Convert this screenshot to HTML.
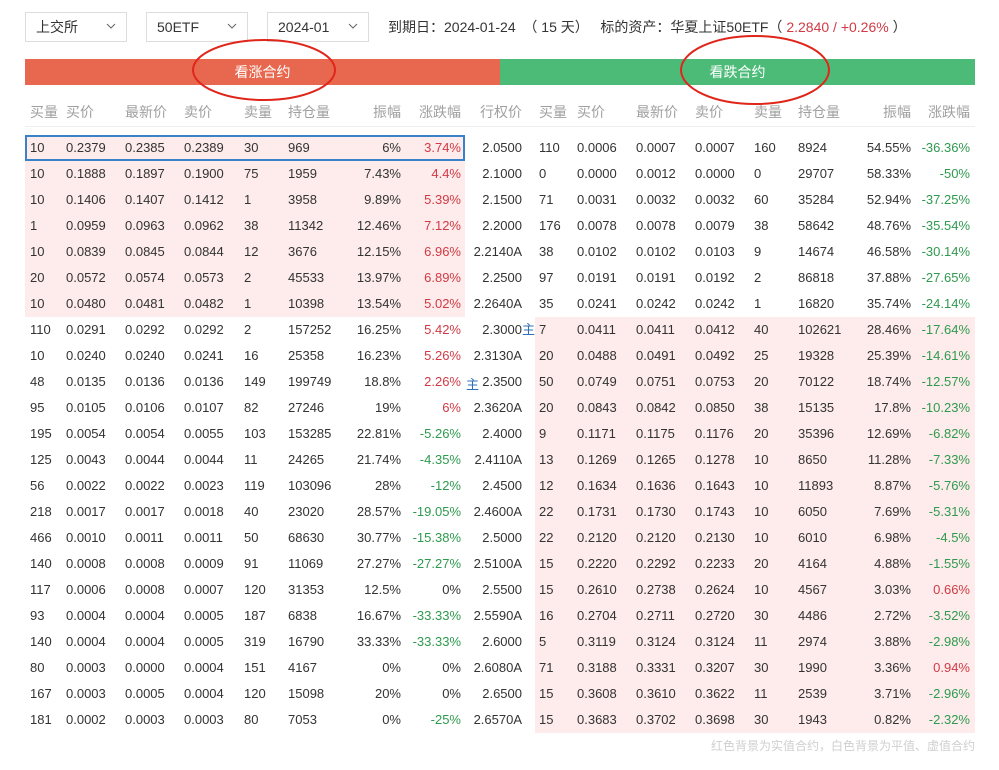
<!DOCTYPE html>
<html><head><meta charset="utf-8"><style>
*{margin:0;padding:0;box-sizing:border-box}
body{width:999px;height:770px;background:#fff;font-family:"Liberation Sans","Noto Sans CJK SC",sans-serif;font-size:13px;color:#333;position:relative;overflow:hidden}
.sel{position:absolute;top:12px;height:30px;width:102px;border:1px solid #ddd;line-height:28px;padding-left:10px;font-size:14px}
.sel svg{position:absolute;right:10px;top:10px}
.bar{position:absolute;top:59px;height:26px;color:#fff;text-align:center;line-height:26px;font-size:14px}
.hd{position:absolute;top:102px;height:22px;color:#a0a0a0;font-size:14px}
.hd span,.rw span{position:absolute;white-space:nowrap}
.rw{position:absolute;height:26px;line-height:26px}
.L{left:25px;width:440px}
.R{left:465px;width:510px}
.p{background:#fdeceb}
.L span:nth-child(1){left:5px}.L span:nth-child(2){left:41px}.L span:nth-child(3){left:100px}.L span:nth-child(4){left:159px}.L span:nth-child(5){left:219px}.L span:nth-child(6){left:263px}.L span:nth-child(7){right:64px}.L span:nth-child(8){right:4px}
.R span:nth-child(1){right:453px}.R span:nth-child(2){left:74px}.R span:nth-child(3){left:112px}.R span:nth-child(4){left:171px}.R span:nth-child(5){left:230px}.R span:nth-child(6){left:289px}.R span:nth-child(7){left:333px}.R span:nth-child(8){right:64px}.R span:nth-child(9){right:5px}
.R.p{background:linear-gradient(90deg,#fff 70px,#fdeceb 70px)}
.r{color:#d13a45}.g{color:#2f9a4f}
.z{color:#2d6fb7}
</style></head><body>
<div class="sel" style="left:25px">上交所<svg width="10" height="7"><path d="M1 1l4 4 4-4" stroke="#666" fill="none"/></svg></div>
<div class="sel" style="left:146px">50ETF<svg width="10" height="7"><path d="M1 1l4 4 4-4" stroke="#666" fill="none"/></svg></div>
<div class="sel" style="left:267px">2024-01<svg width="10" height="7"><path d="M1 1l4 4 4-4" stroke="#666" fill="none"/></svg></div>
<div style="position:absolute;left:388px;top:17px;font-size:14px;white-space:nowrap">到期日：2024-01-24 &nbsp;（ 15 天） &nbsp; 标的资产：华夏上证50ETF（ <span class="r">2.2840 / +0.26%</span> ）</div>
<div class="bar" style="left:25px;width:475px;background:#e8684f">看涨合约</div>
<div class="bar" style="left:500px;width:475px;background:#4cbb78">看跌合约</div>
<svg style="position:absolute;left:0;top:0" width="999" height="120"><ellipse cx="264" cy="70" rx="71" ry="30" fill="none" stroke="#e0261b" stroke-width="2"/><ellipse cx="755" cy="70" rx="74" ry="34" fill="none" stroke="#e0261b" stroke-width="2"/></svg>
<div class="hd L"><span>买量</span><span>买价</span><span>最新价</span><span>卖价</span><span>卖量</span><span>持仓量</span><span>振幅</span><span>涨跌幅</span></div>
<div class="hd R"><span>行权价</span><span>买量</span><span>买价</span><span>最新价</span><span>卖价</span><span>卖量</span><span>持仓量</span><span>振幅</span><span>涨跌幅</span></div>
<div style="position:absolute;left:25px;top:126px;width:950px;height:1px;background:#eee"></div>

<div class="rw L p" style="top:135px;outline:2px solid #3a82c8;outline-offset:-2px"><span>10</span><span>0.2379</span><span>0.2385</span><span>0.2389</span><span>30</span><span>969</span><span>6%</span><span class="r">3.74%</span></div>
<div class="rw L p" style="top:161px"><span>10</span><span>0.1888</span><span>0.1897</span><span>0.1900</span><span>75</span><span>1959</span><span>7.43%</span><span class="r">4.4%</span></div>
<div class="rw L p" style="top:187px"><span>10</span><span>0.1406</span><span>0.1407</span><span>0.1412</span><span>1</span><span>3958</span><span>9.89%</span><span class="r">5.39%</span></div>
<div class="rw L p" style="top:213px"><span>1</span><span>0.0959</span><span>0.0963</span><span>0.0962</span><span>38</span><span>11342</span><span>12.46%</span><span class="r">7.12%</span></div>
<div class="rw L p" style="top:239px"><span>10</span><span>0.0839</span><span>0.0845</span><span>0.0844</span><span>12</span><span>3676</span><span>12.15%</span><span class="r">6.96%</span></div>
<div class="rw L p" style="top:265px"><span>20</span><span>0.0572</span><span>0.0574</span><span>0.0573</span><span>2</span><span>45533</span><span>13.97%</span><span class="r">6.89%</span></div>
<div class="rw L p" style="top:291px"><span>10</span><span>0.0480</span><span>0.0481</span><span>0.0482</span><span>1</span><span>10398</span><span>13.54%</span><span class="r">5.02%</span></div>
<div class="rw L" style="top:317px"><span>110</span><span>0.0291</span><span>0.0292</span><span>0.0292</span><span>2</span><span>157252</span><span>16.25%</span><span class="r">5.42%</span></div>
<div class="rw L" style="top:343px"><span>10</span><span>0.0240</span><span>0.0240</span><span>0.0241</span><span>16</span><span>25358</span><span>16.23%</span><span class="r">5.26%</span></div>
<div class="rw L" style="top:369px"><span>48</span><span>0.0135</span><span>0.0136</span><span>0.0136</span><span>149</span><span>199749</span><span>18.8%</span><span class="r">2.26%</span></div>
<div class="rw L" style="top:395px"><span>95</span><span>0.0105</span><span>0.0106</span><span>0.0107</span><span>82</span><span>27246</span><span>19%</span><span class="r">6%</span></div>
<div class="rw L" style="top:421px"><span>195</span><span>0.0054</span><span>0.0054</span><span>0.0055</span><span>103</span><span>153285</span><span>22.81%</span><span class="g">-5.26%</span></div>
<div class="rw L" style="top:447px"><span>125</span><span>0.0043</span><span>0.0044</span><span>0.0044</span><span>11</span><span>24265</span><span>21.74%</span><span class="g">-4.35%</span></div>
<div class="rw L" style="top:473px"><span>56</span><span>0.0022</span><span>0.0022</span><span>0.0023</span><span>119</span><span>103096</span><span>28%</span><span class="g">-12%</span></div>
<div class="rw L" style="top:499px"><span>218</span><span>0.0017</span><span>0.0017</span><span>0.0018</span><span>40</span><span>23020</span><span>28.57%</span><span class="g">-19.05%</span></div>
<div class="rw L" style="top:525px"><span>466</span><span>0.0010</span><span>0.0011</span><span>0.0011</span><span>50</span><span>68630</span><span>30.77%</span><span class="g">-15.38%</span></div>
<div class="rw L" style="top:551px"><span>140</span><span>0.0008</span><span>0.0008</span><span>0.0009</span><span>91</span><span>11069</span><span>27.27%</span><span class="g">-27.27%</span></div>
<div class="rw L" style="top:577px"><span>117</span><span>0.0006</span><span>0.0008</span><span>0.0007</span><span>120</span><span>31353</span><span>12.5%</span><span>0%</span></div>
<div class="rw L" style="top:603px"><span>93</span><span>0.0004</span><span>0.0004</span><span>0.0005</span><span>187</span><span>6838</span><span>16.67%</span><span class="g">-33.33%</span></div>
<div class="rw L" style="top:629px"><span>140</span><span>0.0004</span><span>0.0004</span><span>0.0005</span><span>319</span><span>16790</span><span>33.33%</span><span class="g">-33.33%</span></div>
<div class="rw L" style="top:655px"><span>80</span><span>0.0003</span><span>0.0000</span><span>0.0004</span><span>151</span><span>4167</span><span>0%</span><span>0%</span></div>
<div class="rw L" style="top:681px"><span>167</span><span>0.0003</span><span>0.0005</span><span>0.0004</span><span>120</span><span>15098</span><span>20%</span><span>0%</span></div>
<div class="rw L" style="top:707px"><span>181</span><span>0.0002</span><span>0.0003</span><span>0.0003</span><span>80</span><span>7053</span><span>0%</span><span class="g">-25%</span></div>

<div class="rw R" style="top:135px"><span>2.0500</span><span>110</span><span>0.0006</span><span>0.0007</span><span>0.0007</span><span>160</span><span>8924</span><span>54.55%</span><span class="g">-36.36%</span></div>
<div class="rw R" style="top:161px"><span>2.1000</span><span>0</span><span>0.0000</span><span>0.0012</span><span>0.0000</span><span>0</span><span>29707</span><span>58.33%</span><span class="g">-50%</span></div>
<div class="rw R" style="top:187px"><span>2.1500</span><span>71</span><span>0.0031</span><span>0.0032</span><span>0.0032</span><span>60</span><span>35284</span><span>52.94%</span><span class="g">-37.25%</span></div>
<div class="rw R" style="top:213px"><span>2.2000</span><span>176</span><span>0.0078</span><span>0.0078</span><span>0.0079</span><span>38</span><span>58642</span><span>48.76%</span><span class="g">-35.54%</span></div>
<div class="rw R" style="top:239px"><span>2.2140A</span><span>38</span><span>0.0102</span><span>0.0102</span><span>0.0103</span><span>9</span><span>14674</span><span>46.58%</span><span class="g">-30.14%</span></div>
<div class="rw R" style="top:265px"><span>2.2500</span><span>97</span><span>0.0191</span><span>0.0191</span><span>0.0192</span><span>2</span><span>86818</span><span>37.88%</span><span class="g">-27.65%</span></div>
<div class="rw R" style="top:291px"><span>2.2640A</span><span>35</span><span>0.0241</span><span>0.0242</span><span>0.0242</span><span>1</span><span>16820</span><span>35.74%</span><span class="g">-24.14%</span></div>
<div class="rw R p" style="top:317px"><span style="right:440px">2.3000<b class="z" style="font-weight:normal">主</b></span><span>7</span><span>0.0411</span><span>0.0411</span><span>0.0412</span><span>40</span><span>102621</span><span>28.46%</span><span class="g">-17.64%</span></div>
<div class="rw R p" style="top:343px"><span>2.3130A</span><span>20</span><span>0.0488</span><span>0.0491</span><span>0.0492</span><span>25</span><span>19328</span><span>25.39%</span><span class="g">-14.61%</span></div>
<div class="rw R p" style="top:369px"><span>2.3500</span><span>50</span><span>0.0749</span><span>0.0751</span><span>0.0753</span><span>20</span><span>70122</span><span>18.74%</span><span class="g">-12.57%</span></div>
<div class="rw R p" style="top:395px"><span>2.3620A</span><span>20</span><span>0.0843</span><span>0.0842</span><span>0.0850</span><span>38</span><span>15135</span><span>17.8%</span><span class="g">-10.23%</span></div>
<div class="rw R p" style="top:421px"><span>2.4000</span><span>9</span><span>0.1171</span><span>0.1175</span><span>0.1176</span><span>20</span><span>35396</span><span>12.69%</span><span class="g">-6.82%</span></div>
<div class="rw R p" style="top:447px"><span>2.4110A</span><span>13</span><span>0.1269</span><span>0.1265</span><span>0.1278</span><span>10</span><span>8650</span><span>11.28%</span><span class="g">-7.33%</span></div>
<div class="rw R p" style="top:473px"><span>2.4500</span><span>12</span><span>0.1634</span><span>0.1636</span><span>0.1643</span><span>10</span><span>11893</span><span>8.87%</span><span class="g">-5.76%</span></div>
<div class="rw R p" style="top:499px"><span>2.4600A</span><span>22</span><span>0.1731</span><span>0.1730</span><span>0.1743</span><span>10</span><span>6050</span><span>7.69%</span><span class="g">-5.31%</span></div>
<div class="rw R p" style="top:525px"><span>2.5000</span><span>22</span><span>0.2120</span><span>0.2120</span><span>0.2130</span><span>10</span><span>6010</span><span>6.98%</span><span class="g">-4.5%</span></div>
<div class="rw R p" style="top:551px"><span>2.5100A</span><span>15</span><span>0.2220</span><span>0.2292</span><span>0.2233</span><span>20</span><span>4164</span><span>4.88%</span><span class="g">-1.55%</span></div>
<div class="rw R p" style="top:577px"><span>2.5500</span><span>15</span><span>0.2610</span><span>0.2738</span><span>0.2624</span><span>10</span><span>4567</span><span>3.03%</span><span class="r">0.66%</span></div>
<div class="rw R p" style="top:603px"><span>2.5590A</span><span>16</span><span>0.2704</span><span>0.2711</span><span>0.2720</span><span>30</span><span>4486</span><span>2.72%</span><span class="g">-3.52%</span></div>
<div class="rw R p" style="top:629px"><span>2.6000</span><span>5</span><span>0.3119</span><span>0.3124</span><span>0.3124</span><span>11</span><span>2974</span><span>3.88%</span><span class="g">-2.98%</span></div>
<div class="rw R p" style="top:655px"><span>2.6080A</span><span>71</span><span>0.3188</span><span>0.3331</span><span>0.3207</span><span>30</span><span>1990</span><span>3.36%</span><span class="r">0.94%</span></div>
<div class="rw R p" style="top:681px"><span>2.6500</span><span>15</span><span>0.3608</span><span>0.3610</span><span>0.3622</span><span>11</span><span>2539</span><span>3.71%</span><span class="g">-2.96%</span></div>
<div class="rw R p" style="top:707px"><span>2.6570A</span><span>15</span><span>0.3683</span><span>0.3702</span><span>0.3698</span><span>30</span><span>1943</span><span>0.82%</span><span class="g">-2.32%</span></div>
<div class="z" style="position:absolute;left:466px;top:374px;font-size:13px">主</div>
<div style="position:absolute;right:24px;top:737px;font-size:12px;color:#cfcfcf">红色背景为实值合约，白色背景为平值、虚值合约</div>
</body></html>
